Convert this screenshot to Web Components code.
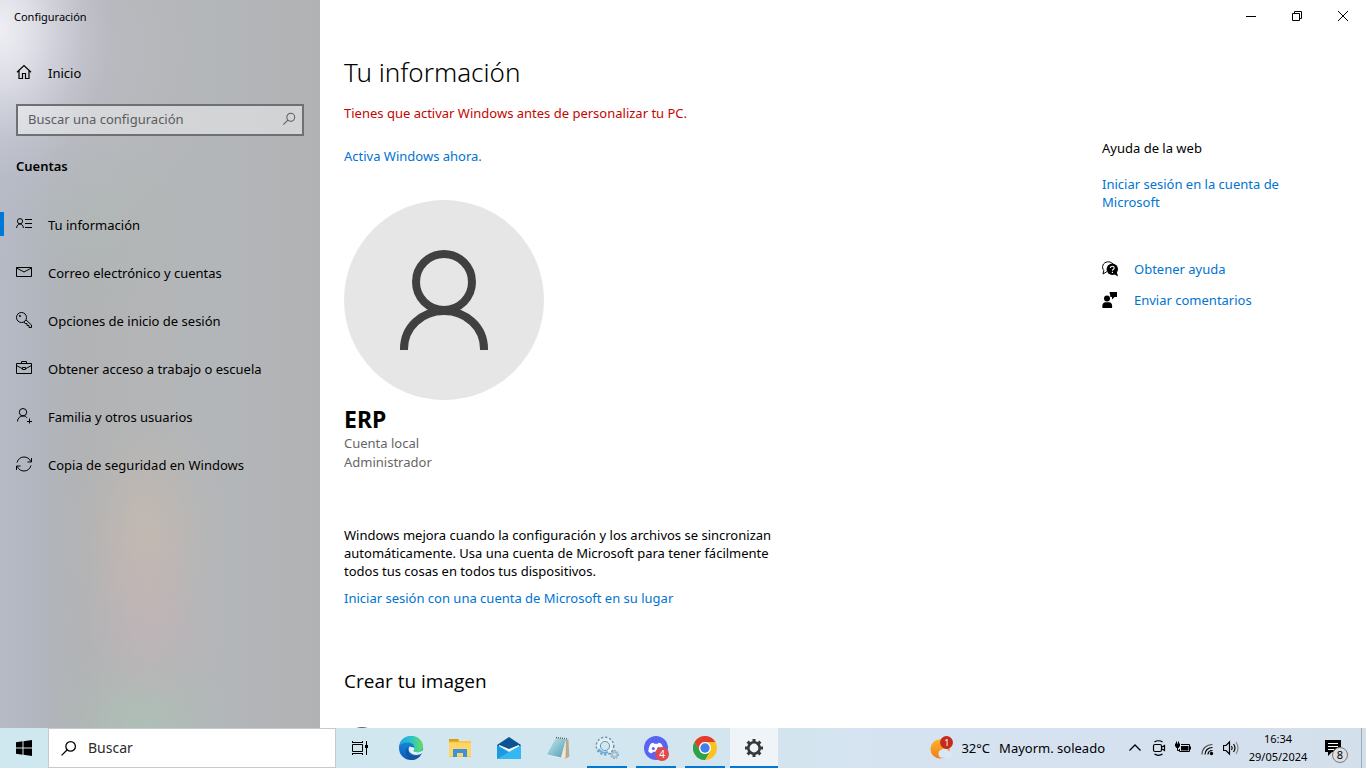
<!DOCTYPE html>
<html lang="es">
<head>
<meta charset="utf-8">
<title>Configuración</title>
<style>
  html, body { margin: 0; height: 100%; }
  body { font-family: "Noto Sans", "Open Sans", sans-serif; font-size: 13px; line-height: 18px; color: #000; background: #fff; overflow: hidden; }
</style>
</head>
<body>
<desktop-screen></desktop-screen>
<script>
const ICONS = {
  home: ['0 0 16 16', '<path d="M1 8.2 8 1.5l7 6.7M3 6.8v7.7h3.5V9.5h3v5H13V6.8" fill="none" stroke="#000" stroke-width="1.2"/>'],
  search: ['0 0 16 16', '<circle cx="10" cy="6" r="4.5" fill="none" stroke="currentColor" stroke-width="1.200"/><path d="M6.8 9.2 1.5 14.5" stroke="currentColor" stroke-width="1.200" fill="none"/>'],
  info: ['0 0 16 16', '<g fill="none" stroke="#000"><circle cx="4" cy="5.2" r="2.6"/><path d="M.6 12c.2-2.600 1.600-4 3.400-4s3.200 1.400 3.400 4M9 3.500h7M9 7.500h7M9 11.500h7"/></g>'],
  mail: ['0 0 16 16', '<g fill="none" stroke="#000"><path d="M.5 3.500h15v9H.5zM.5 4 8 8l7.500-4"/></g>'],
  key: ['0 0 16 16', '<g fill="none" stroke="#000"><circle cx="5.500" cy="5.500" r="5"/><path d="M10 8l5.500 5v2.500h-2.500v-2h-2v-2H9L8 10"/></g><circle cx="4" cy="4" r="1"/>'],
  work: ['0 0 16 16', '<g fill="none" stroke="#000"><path d="M.5 3.500h15v10H.5zM5.500 3.500v-2h5v2M.5 5.500 6 8.500M15.500 5.500 10 8.500M6.500 7.500h3v2h-3z"/></g>'],
  family: ['0 0 16 16', '<g fill="none" stroke="#000"><circle cx="7" cy="4.200" r="3.700"/><path d="M1.500 13.500C1.600 10 4 8 7 8c1.800 0 3.200.7 4 1.800M13.500 10.500v5M11 13.500h5"/></g>'],
  sync: ['0 0 16 16', '<g fill="none" stroke="#000"><path d="M1 6.500C2 3 4.700 1 8 1c3 0 5.500 1.600 6.800 4.500M15 9.500C14 13 11.300 15 8 15c-3 0-5.500-1.600-6.800-4.500M15.500 2v4h-4M.5 14v-4h4"/></g>'],
  min: ['0 0 10 10', '<path d="M0 5.500h10" stroke="#000"/>'],
  restore: ['0 0 10 10', '<path d="M.5 2.500h7v7h-7zM2.500 2.500v-2h7v7h-2" fill="none" stroke="#000"/>'],
  close: ['0 0 10 10', '<path d="M0 0l10 10M10 0 0 10" stroke="#000"/>'],
  help: ['0 0 16 16', '<path d="M5 10.500 1 13l.8-3.500C.6 8 .2 6 1 4c1.500-3.500 7-4.500 10-1" fill="none" stroke="#000"/><circle cx="10.300" cy="8.300" r="5.700"/><path d="M11 12.500l5 3-1.300-5z"/><path d="M8.500 7c0-2.400 3.700-2.200 3.700 0 0 1.300-1.800 1.300-1.800 2.800M10.400 10.700v1.200" stroke="#fff" fill="none" stroke-width="1.100"/>'],
  feedback: ['0 0 16 16', '<circle cx="5" cy="6.500" r="3"/><path d="M.5 16c-.8-4 1-5.800 3-5.800h3.500c2.300 0 3.700 2 3 5.800zM7.500 0H15v5h-2.500L10 7.500V5H8.500z"/>'],
  person: ['0 0 100 104', '<g fill="none" stroke="#404040" stroke-width="8"><circle cx="50" cy="34" r="28"/><path d="M10 102v-1C10 79 28 63 50 63s40 16 40 38v1"/></g>'],
  camera: ['0 0 36 36', '<circle cx="18" cy="18" r="16" fill="#666"/>'],
  start: ['0 0 16 16', '<path d="M0 2.200 6.500 1.300V7.500H0zM7.500 1.200 16 0v7.500H7.500zM0 8.500h6.500v6.200L0 13.800zM7.500 8.500H16V16l-8.500-1.200z"/>'],
  taskview: ['0 0 16 16', '<g fill="none" stroke="#000"><path d="M.5 4.500h10v7H.5zM.5 1v2M.5 2.500h10M10.500 1v2M.5 15v-2M.5 13.500h10M10.500 15v-2M14.500 1v14"/></g><path d="M13 5h3v3h-3z"/>'],
  edge: ['0 0 24 24', '<defs><linearGradient id="a" x1="0" x2="1"><stop offset="0" stop-color="#1aa3e0"/><stop offset=".5" stop-color="#2cc3c9"/><stop offset="1" stop-color="#66e05a"/></linearGradient><linearGradient id="b" y2="1" x2="0"><stop stop-color="#1995de"/><stop offset="1" stop-color="#0c59b8"/></linearGradient></defs><circle cx="12" cy="12" r="12" fill="url(#b)"/><path d="M.2 10C1.500 4 6 0 12 0c7 0 12 5 12 10.500 0 3.500-3 5.800-6 5.800-2 0-3.500-.8-3.500-1.500s1-1.200 1-3C15.500 9 13 6.500 9 6.500c-4 0-7.500 1.500-8.800 3.500z" fill="url(#a)"/><path d="M9 11c-1.500 5 2.500 9.500 7.500 9.500 2.500 0 4.200-.7 5.600-1.800C19.500 22.500 16 24 12.500 24 7 23 5 14 9 11z" fill="#1554a0"/><path d="M10.500 10.500c-1.600 2.800-.7 6.200 3 7.800 3.300 1.400 7 .8 9.800-1.500l.7-3c-2 2.200-4 2.500-6 2.500-2 0-3.500-.8-3.500-1.500s1-1.200 1-3z" fill="#e3f2f7"/>'],
  folder: ['0 0 24 24', '<path d="M1 3h9l1.500 2H23v16H1z" fill="#f9c941"/><path d="M1 3h9l1 2.500H1z" fill="#d99c14"/><path d="M1 7h22v13H1z" fill="#ffd567"/><path d="M5 13h14v8h-4v-4H9v4H5z" fill="#3b92dc"/>'],
  mailapp: ['0 0 24 24', '<path d="M0 9 12 1l12 8v3H0z" fill="#0b5394"/><path d="M2 9h20v8H2z" fill="#f2f7fa"/><path d="M0 9l14 8-8 6H0z" fill="#1a9be0"/><path d="M24 9 0 23h24z" fill="#35b8f1"/><path d="M1 8.500h22L12 13z" fill="#0b5394"/>'],
  notepad: ['0 0 24 24', '<defs><linearGradient id="c" x2="1" y2="1"><stop stop-color="#c9e9ef"/><stop offset="1" stop-color="#4f9fb4"/></linearGradient></defs><path d="M10 1.500l12 1 1 18-4 2.500L1 19z" fill="#f3f5f0"/><path d="M10 1.500l10 2-5 18L1 18.500z" fill="url(#c)"/><path d="M20 3.500l2.500 0 .8 17-4 2.500-4.500-1.500z" fill="#b9aa8c"/><path d="M20 3.500l-.5 19.500-4.500-1.500z" fill="#ece8dc"/><path d="M10 1.500l12 1.500" stroke="#50646b" stroke-dasharray="1 1" stroke-width="1.500"/>'],
  gears: ['0 0 24 24', '<g fill="none"><circle cx="10" cy="10" r="8.500" stroke="#6d8ea5" stroke-width="2" stroke-dasharray="2 2"/><circle cx="10" cy="10" r="6.300" stroke="#e4eff6" stroke-width="3.500"/><circle cx="10" cy="10" r="4.600" stroke="#6a93b0"/><path d="M3.500 13a7 7 0 0 0 9.500 3" stroke="#5fb0e6" stroke-width="2"/><circle cx="19.500" cy="18.500" r="4" stroke="#6a8799" stroke-dasharray="1.500 1.500"/><circle cx="19.500" cy="18.500" r="2.500" stroke="#9dbfd4" stroke-width="2"/></g>'],
  discord: ['0 0 24 24', '<circle cx="12" cy="12" r="12" fill="#5865f2"/><path d="M6.500 8C8 7 9 6.800 9.500 6.800l.6.900h3.800l.6-.9c.5 0 1.500.2 3 1.200 1.800 3 2.200 5.500 2 7.800-1.500 1.100-2.600 1.400-3.500 1.500l-.8-1.500H8.800l-.8 1.500c-.9-.1-2-.4-3.500-1.500C4.300 13.500 4.700 11 6.500 8z" fill="#fff"/><circle cx="9.300" cy="12.500" r="1.500" fill="#5865f2"/><circle cx="14.700" cy="12.500" r="1.500" fill="#5865f2"/>'],
  chrome: ['0 0 24 24', '<circle cx="12" cy="12" r="12" fill="#fcc31e"/><path d="M1.600 6A12 12 0 0 1 22.400 6H12a6 6 0 0 0-5.200 9z" fill="#e33b2e"/><path d="M1.600 6A12 12 0 0 0 12 24l5.200-9a6 6 0 0 1-10.400 0z" fill="#2ba24c"/><circle cx="12" cy="12" r="6" fill="#fff"/><circle cx="12" cy="12" r="4.700" fill="#3f7fee"/>'],
  settings: ['0 0 20 20', '<circle cx="10" cy="10" r="5.700" fill="none" stroke="#383838" stroke-width="2.600"/><g stroke="#383838" stroke-width="3"><path d="M10 1v3M10 16v3M1 10h3M16 10h3M3.600 3.600l2.200 2.200M14.200 14.200l2.200 2.200M3.600 16.400l2.200-2.200M14.200 5.800l2.200-2.200"/></g>'],
  weather: ['0 0 24 24', '<defs><linearGradient id="d" x2="0" y2="1"><stop stop-color="#ffb52b"/><stop offset="1" stop-color="#f07c18"/></linearGradient></defs><circle cx="11" cy="13" r="10.500" fill="url(#d)"/><path d="M12 22.500a4.500 4.500 0 0 1 .5-8.500 5 5 0 0 1 8 1.500 3.600 3.600 0 0 1 .5 7z" fill="#d8e7f8"/>'],
  chevron: ['0 0 16 16', '<path d="M2.500 10.500 8 5l5.500 5.500" fill="none" stroke="#000" stroke-width="1.300"/>'],
  meet: ['0 0 16 16', '<g fill="none" stroke="#000" stroke-width="1.200"><rect x="2.500" y="4.500" width="8" height="7" rx="1.500"/><path d="M11 7l2.500-1.500v5L11 9M3.500 2C5.500.3 9.500.3 11.500 2M3.500 14c2 1.700 6 1.700 8 0"/></g>'],
  battery: ['0 0 16 16', '<path d="M6 4.500h8.500v7H4.500V9" fill="none" stroke="#000"/><path d="M6 6h7.500v4.500H6zM15 6.500h1v3h-1zM0 3.500h5V6L3.500 8h-2L0 6z"/><path d="M1.500 1.500v3M3.500 1.500v3M2.500 8v2.500h2" stroke="#000" fill="none"/>'],
  wifi: ['0 0 16 16', '<g fill="none" stroke="#000" stroke-width="1.200"><path d="M9 14.500c0-2 1.500-4 4.500-4M6 14.500c0-4 3-7 7.500-7"/><path d="M3 14.500c0-6 4.500-10 10.500-10" stroke="#555"/></g><circle cx="12.500" cy="13.500" r="1.700"/>'],
  sound: ['0 0 16 16', '<g fill="none" stroke="#000" stroke-width="1.200"><path d="M.5 5.500H3L6.500 2v12L3 10.500H.5z"/><path d="M8.500 6q1.500 2 0 4M10.500 4q3 4 0 8"/><path d="M13 2q4 6 0 12" stroke="#888"/></g>'],
  note: ['0 0 18 18', '<path d="M1 1h16v12H8l-4 4v-4H1z"/><path d="M4 4.500h10M4 7.500h10M4 10.500h6" stroke="#fff"/>']
};

class Base extends HTMLElement {
  constructor() {
    super();
    this.attachShadow({ mode: 'open' });
  }
  connectedCallback() {
    this.shadowRoot.innerHTML = '<style>*{box-sizing:border-box}' + this.css() + '</style>' + this.html();
  }
}

/* <ui-icon name size> */
customElements.define('ui-icon', class extends Base {
  css() { return ':host{display:inline-flex;flex:none;width:' + (this.getAttribute('size') || 16) + 'px}svg{display:block;width:100%}'; }
  html() {
    const [box, body] = ICONS[this.getAttribute('name')];
    return `<svg viewBox="${box}" aria-hidden="true">${body}</svg>`;
  }
});

customElements.define('text-link', class extends Base {
  css() { return ':host{display:block}a{color:#0074d1;text-decoration:none}a:hover{color:#666}'; }
  html() { return '<a href="#"><slot></slot></a>'; }
});

customElements.define('nav-item', class extends Base {
  css() {
    return `:host{display:block}
    a{display:flex;align-items:center;gap:16px;height:48px;padding-left:16px;color:#000;text-decoration:none;position:relative}
    ui-icon{padding-bottom:2px}
    a[aria-current]::before{content:"";position:absolute;left:0;top:11px;width:4px;height:24px;background:#0078d7}`;
  }
  html() {
    return `<a href="#" ${this.hasAttribute('current') ? 'aria-current="page"' : ''}><ui-icon name="${this.getAttribute('icon')}"></ui-icon><span><slot></slot></span></a>`;
  }
});

customElements.define('settings-sidebar', class extends Base {
  css() {
    const blob = (size, at, rgb, a) => `radial-gradient(${size} at ${at}, rgba(${rgb},${a}), rgba(${rgb},${a * .8}) 22%, rgba(${rgb},${a * .4}) 50%, rgba(${rgb},${a * .12}) 76%, rgba(${rgb},0))`;
    return `:host{display:flex;flex-direction:column;min-height:0;overflow:hidden;
      background:
        ${blob('110px 150px', '0 30px', '246,246,250', .85)},
        ${blob('190px 220px', '40px 50px', '196,196,212', .65)},
        ${blob('85px 130px', '146px 530px', '202,186,174', .6)},
        ${blob('85px 120px', '148px 615px', '200,178,184', .5)},
        ${blob('100px 90px', '142px 725px', '172,194,182', .75)},
        ${blob('110px 130px', '90px 210px', '174,186,182', .4)},
        linear-gradient(90deg, #b5bac5 0, #b2b6bf 34px, #b1b4b9 56px, #b1b3b5 85px, #b3b5b6 140px, #b3b6b9 220px, #b1b2b4)}
    .title{height:32px;padding:8px 14px;font-size:11px;line-height:18px}
    .home{margin-top:17px}
    .search{display:flex;align-items:center;height:32px;margin:7px 16px 0;padding:0 6px 2px 10px;border:2px solid #6e7073;background:rgba(255,255,255,.42);color:#5c5e61}
    input{flex:1;min-width:0;border:0;padding:0;outline:0;background:none;font:inherit;color:#000}
    input::placeholder{color:#5a5c5e;opacity:1}
    h2{margin:21px 16px 26px;font-size:13px;line-height:18px;font-weight:600}
    nav{display:flex;flex-direction:column}`;
  }
  html() {
    return `<div class="title">Configuración</div>
    <nav-item class="home" icon="home">Inicio</nav-item>
    <label class="search"><input type="text" aria-label="Buscar una configuración" placeholder="Buscar una configuración"><ui-icon name="search" size="14"></ui-icon></label>
    <h2>Cuentas</h2>
    <nav>
      <nav-item icon="info" current>Tu información</nav-item>
      <nav-item icon="mail">Correo electrónico y cuentas</nav-item>
      <nav-item icon="key">Opciones de inicio de sesión</nav-item>
      <nav-item icon="work">Obtener acceso a trabajo o escuela</nav-item>
      <nav-item icon="family">Familia y otros usuarios</nav-item>
      <nav-item icon="sync">Copia de seguridad en Windows</nav-item>
    </nav>`;
  }
});

customElements.define('window-controls', class extends Base {
  css() {
    return `:host{display:flex;justify-content:flex-end;height:32px}
    button{display:flex;align-items:center;justify-content:center;width:46px;border:0;padding:0;background:none}`;
  }
  html() {
    return [['Minimizar', 'min'], ['Restaurar', 'restore'], ['Cerrar', 'close']]
      .map(([t, i]) => `<button aria-label="${t}"><ui-icon name="${i}" size="10"></ui-icon></button>`).join('');
  }
});

customElements.define('account-card', class extends Base {
  css() {
    return `:host{display:block;color:#666;line-height:19px}
    .avatar{display:flex;justify-content:center;align-items:flex-start;width:200px;height:200px;padding-top:48px;border-radius:50%;background:#e6e6e6}
    h2{margin:4px 0 0;font-size:23px;line-height:30px;font-weight:700;color:#000}
    p{margin:0}`;
  }
  html() {
    return `<div class="avatar"><ui-icon name="person" size="100"></ui-icon></div><h2><slot name="name"></slot></h2><p><slot name="type"></slot></p><p><slot name="role"></slot></p>`;
  }
});

customElements.define('account-page', class extends Base {
  css() {
    return `:host{display:block;padding:22px 24px 0}
    h1{margin:0;font-size:26px;line-height:36px;font-weight:300}
    .warn{margin:14px 0 25px;color:#c50500}
    account-card{margin-top:35px}
    .sync{margin:54px 0 9px;max-width:448px}
    h3{margin:62px 0 32px;font-size:19px;line-height:24px;font-weight:400;font-family:"Open Sans","Noto Sans",sans-serif}`;
  }
  html() {
    return `<h1>Tu información</h1>
    <p class="warn">Tienes que activar Windows antes de personalizar tu PC.</p>
    <text-link>Activa Windows ahora.</text-link>
    <account-card><span slot="name">ERP</span><span slot="type">Cuenta local</span><span slot="role">Administrador</span></account-card>
    <p class="sync">Windows mejora cuando la configuración y los archivos se sincronizan automáticamente. Usa una cuenta de Microsoft para tener fácilmente todos tus cosas en todos tus dispositivos.</p>
    <text-link>Iniciar sesión con una cuenta de Microsoft en su lugar</text-link>
    <h3>Crear tu imagen</h3>
    <ui-icon name="camera" size="36"></ui-icon>`;
  }
});

customElements.define('help-panel', class extends Base {
  css() {
    return `:host{display:block;padding:107px 72px 0 0}
    h4{margin:0 0 18px;font-size:13px;font-weight:400}
    ul{list-style:none;margin:49px 0 0;padding:0;display:grid;gap:13px}
    li{display:flex;align-items:center;gap:16px}`;
  }
  html() {
    return `<h4>Ayuda de la web</h4><text-link>Iniciar sesión en la cuenta de Microsoft</text-link>
    <ul><li><ui-icon name="help"></ui-icon><text-link>Obtener ayuda</text-link></li>
    <li><ui-icon name="feedback"></ui-icon><text-link>Enviar comentarios</text-link></li></ul>`;
  }
});

customElements.define('settings-window', class extends Base {
  css() {
    return `:host{display:grid;grid-template-columns:320px minmax(0,1fr);min-height:0}
    main{display:flex;flex-direction:column;min-height:0;background:#fff}
    .scroll{flex:1;min-height:0;overflow:hidden;display:grid;grid-template-columns:minmax(0,1fr) 264px}`;
  }
  html() {
    return `<settings-sidebar></settings-sidebar><main><window-controls></window-controls>
    <div class="scroll"><account-page></account-page><help-panel></help-panel></div></main>`;
  }
});

customElements.define('task-button', class extends Base {
  css() {
    return `:host{display:flex}
    button{position:relative;display:flex;align-items:center;justify-content:center;width:48px;border:0;padding:0;background:none;font:inherit}
    :host([active]) button{background:#eef4f8}
    :host([running]) button::after,:host([active]) button::after{content:"";position:absolute;left:4px;right:4px;bottom:0;height:2px;background:#0078d7}
    :host([active]) button::after{left:0;right:0}
    .badge{position:absolute;left:23px;top:19px;width:14px;height:14px;border-radius:50%;background:#e2484d;color:#fff;font-size:10px;line-height:14px;text-align:center}`;
  }
  html() {
    const b = this.getAttribute('badge');
    return `<button aria-label="${this.getAttribute('label')}"><ui-icon name="${this.getAttribute('icon')}" size="${this.getAttribute('size') || 24}"></ui-icon>${b ? `<span class="badge">${b}</span>` : ''}</button>`;
  }
});

customElements.define('system-tray', class extends Base {
  css() {
    return `:host{display:flex;align-items:stretch}
    button{display:flex;align-items:center;justify-content:center;border:0;padding:0;background:none;font:inherit;color:#000;position:relative}
    .weather{gap:9px;padding:0 18px 0 0;font-size:13px}
    .weather .badge{position:absolute;left:10px;top:8px;width:13px;height:13px;border-radius:50%;background:#c42b1c;color:#fff;font-size:9px;line-height:13px}
    .tray{width:24px}
    .clock{display:block;width:70px;font-size:11px;line-height:18px;text-align:center;padding-bottom:1px}
    .clock time{display:block}
    .notes{width:48px;padding-right:8px}
    .notes .badge{position:absolute;left:19px;top:19px;width:16px;height:16px;border:1px solid #777;border-radius:50%;background:#dcdfe2;font-size:11px;line-height:14px}
    .peek{width:5px;border-left:1px solid #9fabb5}`;
  }
  html() {
    const tray = [['Mostrar iconos ocultos', 'chevron'], ['Reunirse ahora', 'meet'], ['Batería', 'battery'], ['Red', 'wifi'], ['Volumen', 'sound']]
      .map(([t, i]) => `<button class="tray" aria-label="${t}"><ui-icon name="${i}"></ui-icon></button>`).join('');
    return `<button class="weather"><ui-icon name="weather" size="22"></ui-icon><span class="badge">1</span><span>32°C</span><span>Mayorm. soleado</span></button>${tray}
    <button class="clock"><time>16:34</time><time>29/05/2024</time></button>
    <button class="notes" aria-label="Notificaciones"><ui-icon name="note" size="18"></ui-icon><span class="badge">8</span></button>
    <button class="peek" aria-label="Mostrar escritorio"></button>`;
  }
});

customElements.define('task-bar', class extends Base {
  css() {
    return `:host{display:flex;height:40px;background:linear-gradient(90deg,#cfe7ee,#d2e6ef 45%,#d6e2f0 75%,#d3dfeb)}
    .search{display:flex;align-items:center;gap:11px;width:288px;padding:0 11px;border:1px solid #c4cbce;background:#fff}
    input{flex:1;min-width:0;border:0;padding:0;outline:0;background:none;font:inherit;font-size:14px}
    input::placeholder{color:#2b2b2b;opacity:1}
    .apps{display:flex;gap:1px;margin-left:3px}
    system-tray{margin-left:auto}`;
  }
  html() {
    return `<task-button icon="start" size="16" label="Inicio"></task-button>
    <label class="search"><ui-icon name="search" size="17"></ui-icon><input type="text" aria-label="Buscar" placeholder="Buscar"></label>
    <task-button icon="taskview" size="16" label="Vista de tareas"></task-button>
    <div class="apps">
      <task-button icon="edge" label="Edge"></task-button>
      <task-button icon="folder" label="Explorador"></task-button>
      <task-button icon="mailapp" label="Correo"></task-button>
      <task-button icon="notepad" label="Bloc de notas"></task-button>
      <task-button icon="gears" label="Servicios" running></task-button>
      <task-button icon="discord" label="Discord" badge="4" running></task-button>
      <task-button icon="chrome" label="Chrome" running></task-button>
      <task-button icon="settings" size="20" label="Configuración" active></task-button>
    </div>
    <system-tray></system-tray>`;
  }
});

customElements.define('desktop-screen', class extends Base {
  css() { return ':host{display:grid;grid-template-rows:minmax(0,1fr) 40px;height:100vh}'; }
  html() { return '<settings-window></settings-window><task-bar></task-bar>'; }
});
</script>
</body>
</html>
